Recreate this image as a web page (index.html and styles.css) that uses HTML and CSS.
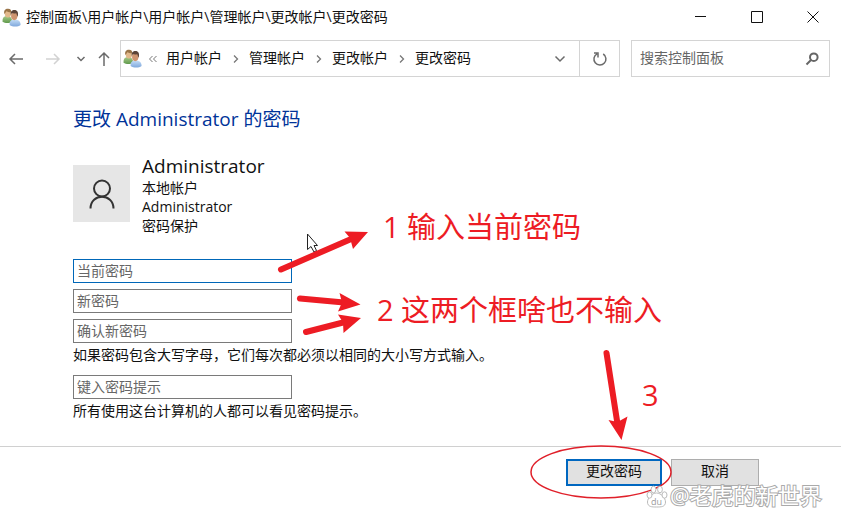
FILE: index.html
```html
<!DOCTYPE html>
<html lang="zh-CN">
<head>
  <meta charset="UTF-8" />
  <meta name="viewport" content="width=device-width, initial-scale=1" />
  <title>更改密码</title>
  <link rel="stylesheet" href="styles.css">
</head>
<body>

  <!-- Shared user accounts icon -->
  <svg class="symbols" aria-hidden="true">
    <defs>
      <linearGradient id="greenBody" x1="0" y1="0" x2="0" y2="1">
        <stop offset="0" stop-color="#a9c98a" />
        <stop offset="1" stop-color="#5f9a4c" />
      </linearGradient>
      <linearGradient id="blueBody" x1="0" y1="0" x2="0" y2="1">
        <stop offset="0" stop-color="#c3dcf6" />
        <stop offset="1" stop-color="#7fa8dc" />
      </linearGradient>
    </defs>
    <symbol id="users" viewBox="0 0 18 18">
      <path d="M0.5 13 C0.3 9 2 7.6 5 7.6 C8 7.6 9.6 9.4 9.6 13 C7 14.6 3 14.6 0.5 13Z" fill="url(#greenBody)" />
      <ellipse cx="5.6" cy="5.2" rx="3" ry="3.7" fill="#e2b98c" />
      <path d="M2.2 5.6 C1.4 2 3.4 0.6 5.6 0.7 C8 0.6 9.2 2.2 8.6 4.2 C6.6 4.2 5 3.2 4 3 C3.6 4 3 5 2.2 5.6Z" fill="#9a7448" />
      <path d="M7.2 16 C7 12.2 9 11 12 11 C15.4 11 17.6 12.8 17.6 16 C15 18 10 18 7.2 16Z" fill="url(#blueBody)" />
      <ellipse cx="11.6" cy="7.6" rx="3" ry="3.9" fill="#cf9570" />
      <path d="M8.4 6.6 C7.8 3.4 9.4 2 11.8 2 C14.6 2 15.8 4.2 14.9 8.2 C14.2 7.4 14 6 13.4 5 C11.8 5.4 10 5.2 9.4 4.8 Z" fill="#5b4438" />
    </symbol>
  </svg>

  <div class="window">

    <header class="title-bar">
      <svg class="users-icon"><use href="#users" /></svg>
      <span class="title">控制面板\用户帐户\用户帐户\管理帐户\更改帐户\更改密码</span>
      <div class="window-buttons">
        <button type="button" aria-label="最小化">
          <svg width="12" height="12" viewBox="0 0 12 12"><path d="M0 5.5H11" /></svg>
        </button>
        <button type="button" aria-label="最大化">
          <svg width="12" height="12" viewBox="0 0 12 12"><path d="M0.5 0.5H11.5V11.5H0.5Z" /></svg>
        </button>
        <button type="button" aria-label="关闭">
          <svg width="12" height="12" viewBox="0 0 12 12"><path d="M0.5 0.5L11.5 11.5M11.5 0.5L0.5 11.5" /></svg>
        </button>
      </div>
    </header>

    <nav class="nav-bar">
      <button class="nav-back" type="button" aria-label="后退">
        <svg width="16" height="14" viewBox="0 0 16 14"><path d="M15 7H2M7 2L2 7L7 12" /></svg>
      </button>
      <button class="nav-forward" type="button" aria-label="前进" disabled>
        <svg width="16" height="14" viewBox="0 0 16 14"><path d="M1 7H14M9 2L14 7L9 12" /></svg>
      </button>
      <button class="nav-recent" type="button" aria-label="最近浏览的位置">
        <svg width="10" height="8" viewBox="0 0 10 8"><path d="M1.5 2L5 5.5L8.5 2" /></svg>
      </button>
      <button class="nav-up" type="button" aria-label="上移">
        <svg width="14" height="16" viewBox="0 0 14 16"><path d="M7 15V2M2 7L7 2L12 7" /></svg>
      </button>

      <div class="address-bar">
        <svg class="users-icon"><use href="#users" /></svg>
        <svg class="double-chevron" width="10" height="8" viewBox="0 0 10 8"><path d="M4.5 1L1.5 4L4.5 7M8.5 1L5.5 4L8.5 7" /></svg>
        <a href="#">用户帐户</a>
        <svg class="chevron" viewBox="0 0 6 10"><path d="M1 1.5L4.5 5L1 8.5" /></svg>
        <a href="#">管理帐户</a>
        <svg class="chevron" viewBox="0 0 6 10"><path d="M1 1.5L4.5 5L1 8.5" /></svg>
        <a href="#">更改帐户</a>
        <svg class="chevron" viewBox="0 0 6 10"><path d="M1 1.5L4.5 5L1 8.5" /></svg>
        <a href="#">更改密码</a>
        <button class="address-history" type="button" aria-label="以前的位置">
          <svg width="12" height="8" viewBox="0 0 12 8"><path d="M1.5 1.5L6 6L10.5 1.5" /></svg>
        </button>
        <button class="refresh" type="button" aria-label="刷新">
          <svg width="16" height="16" viewBox="0 0 16 16"><path d="M11.2 3A6 6 0 1 1 5 2.8M2 2H6V6.4" /></svg>
        </button>
      </div>

      <div class="search-box">
        <input type="text" placeholder="搜索控制面板" aria-label="搜索控制面板">
        <svg width="14" height="14" viewBox="0 0 14 14"><circle cx="8.8" cy="5.2" r="3.8" /><path d="M6 8L1.5 12.5" /></svg>
      </div>
    </nav>

    <form class="password-form">
      <main class="content">
        <h1>更改 Administrator 的密码</h1>

        <div class="account">
          <div class="avatar">
            <svg width="28" height="32" viewBox="0 0 28 32"><circle cx="14" cy="10.5" r="8" /><path d="M2.5 30.5C2.5 14.8 25.5 14.8 25.5 30.5" /></svg>
          </div>
          <div class="account-info">
            <h2>Administrator</h2>
            <p>本地帐户</p>
            <p>Administrator</p>
            <p>密码保护</p>
          </div>
        </div>

        <div class="fields">
          <input class="active" type="password" placeholder="当前密码" aria-label="当前密码">
          <input type="password" placeholder="新密码" aria-label="新密码">
          <input type="password" placeholder="确认新密码" aria-label="确认新密码">
        </div>
        <p class="hint">如果密码包含大写字母，它们每次都必须以相同的大小写方式输入。</p>

        <div class="fields">
          <input type="text" placeholder="键入密码提示" aria-label="键入密码提示">
        </div>
        <p class="hint">所有使用这台计算机的人都可以看见密码提示。</p>
      </main>

      <footer class="actions">
        <button class="primary" type="button">更改密码</button>
        <button type="button">取消</button>
      </footer>
    </form>

    <!-- Red marks, mouse pointer and watermark drawn over the window -->
    <svg class="annotations" width="841" height="526" viewBox="0 0 841 526">
      <path class="pointer" d="M307.500 234V249.500L311 246.500L314 252L316.500 250.500L314 245.500H317.500Z" />

      <g class="arrows">
        <path d="M281 269.500L350 239.500" />
        <path d="M300 298.500L344 302.500" />
        <path d="M306 332L345 322" />
        <path d="M606.500 353L617.500 424" />
      </g>
      <g class="arrow-heads">
        <path d="M368 232L344.500 231.500L350 238L353 249Z" />
        <path d="M360.500 304.500L339.500 293L342 302.500L338 311.500Z" />
        <path d="M361 318L338 314.500L343 322.500L343.500 333Z" />
        <path d="M621.500 440L608.500 420L617.500 422L627.500 416.500Z" />
      </g>
      <ellipse cx="601" cy="472" rx="70" ry="26" />

      <text class="note" x="383" y="238">1 输入当前密码</text>
      <text class="note" x="377" y="321">2 这两个框啥也不输入</text>
      <text class="note" x="642" y="406">3</text>

      <g class="paw">
        <path d="M656.500 493C661 493 665.500 498 665.500 502C665.500 507 661 507 656.500 507C652 507 647.500 507 647.500 502C647.500 498 652 493 656.500 493Z" />
        <ellipse cx="649.500" cy="495" rx="2.500" ry="3.200" />
        <ellipse cx="653.500" cy="489.500" rx="2.400" ry="3.300" />
        <ellipse cx="660" cy="489.500" rx="2.400" ry="3.300" />
        <ellipse cx="664.500" cy="495" rx="2.500" ry="3.200" />
      </g>
      <text class="paw-text" x="651" y="505">du</text>
      <text class="watermark" x="670" y="504">@老虎的新世界</text>
    </svg>

  </div>

</body>
</html>
```
FILE: styles.css
```css
* {
  box-sizing: border-box;
}

body {
  margin: 0;
  background: #fff;
  color: #111;
  font-family: "Open Sans", "Noto Sans CJK SC", sans-serif;
  font-size: 14px;
}

h1,
h2,
p {
  margin: 0;
  font-weight: 400;
}

button,
input {
  font: inherit;
  color: inherit;
}

button {
  padding: 0;
  border: 0;
  background: none;
}

svg {
  display: block;
  flex: none;
  fill: none;
}

a {
  color: inherit;
  text-decoration: none;
}

.symbols {
  position: absolute;
  width: 0;
  height: 0;
}

.window {
  position: relative;
  display: flex;
  flex-direction: column;
  min-height: 100vh;
  overflow: hidden;
}

.users-icon {
  width: 19px;
  height: 19px;
}

/* Title bar */
.title-bar {
  display: flex;
  align-items: center;
  height: 34px;
  padding-left: 2px;
}

.title {
  flex: 1;
  margin-left: 5px;
  padding-bottom: 2px;
  white-space: nowrap;
}

.window-buttons {
  display: flex;
}

.window-buttons button {
  display: flex;
  align-items: center;
  justify-content: center;
  width: 56px;
  height: 34px;
}

.window-buttons svg {
  stroke: #111;
}

/* Navigation */
.nav-bar {
  display: flex;
  height: 43px;
  padding: 6px 11px 0 0;
}

.nav-bar button {
  display: flex;
  align-items: center;
  justify-content: center;
}

.nav-bar button svg {
  stroke: #6b6b6b;
  stroke-width: 1.5;
}

.nav-bar .nav-forward svg {
  stroke: #d2d2d2;
}

.nav-back,
.nav-up {
  width: 32px;
}

.nav-forward {
  width: 42px;
}

.nav-recent {
  width: 14px;
}

.address-bar {
  display: flex;
  flex: 1;
  align-items: center;
  padding-left: 2px;
  border: 1px solid #d4d4d4;
  white-space: nowrap;
}

.address-bar a {
  padding-bottom: 3px;
}

.double-chevron {
  margin: 0 8px 0 6px;
  stroke: #777;
}

.chevron {
  width: 6px;
  height: 10px;
  margin: 0 10px 0 11px;
  stroke: #777;
  stroke-width: 1.3;
}

.address-history {
  width: 38px;
  height: 100%;
  margin-left: auto;
}

.refresh {
  width: 40px;
  height: 100%;
}

.nav-bar .refresh {
  border-left: 1px solid #d4d4d4;
}

.search-box {
  display: flex;
  align-items: center;
  width: 199px;
  margin-left: 11px;
  padding: 0 10px 0 8px;
  border: 1px solid #d4d4d4;
}

.search-box input {
  flex: 1;
  min-width: 0;
  padding: 0 0 2px;
  border: 0;
  outline: 0;
}

.search-box svg {
  stroke: #666;
  stroke-width: 2;
}

input::placeholder {
  color: #666;
  opacity: 1;
}

/* Form */
.password-form {
  display: flex;
  flex: 1;
  flex-direction: column;
}

.content {
  flex: 1;
  padding: 28px 73px 25px;
}

h1 {
  color: #039;
  font-size: 19px;
  line-height: 28px;
}

.account {
  display: flex;
  gap: 12px;
  margin: 21px 0 24px;
}

.avatar {
  display: flex;
  align-items: center;
  justify-content: center;
  width: 57px;
  height: 57px;
  margin-top: 11px;
  background: #e6e6e6;
}

.avatar svg {
  stroke: #333;
  stroke-width: 2;
}

.account-info {
  line-height: 19px;
}

h2 {
  font-size: 19px;
  line-height: 24px;
}

.fields {
  display: flex;
  flex-direction: column;
  gap: 6px;
  width: 219px;
}

.fields input {
  height: 24px;
  padding: 0 3px 2px;
  border: 1px solid #7a7a7a;
  outline: 0;
}

.fields .active {
  border-color: #0067b8;
}

.hint {
  margin-top: 2px;
  line-height: 20px;
}

.hint + .fields {
  margin-top: 10px;
}

.actions {
  display: flex;
  justify-content: flex-end;
  gap: 9px;
  padding: 12px 82px 40px;
  border-top: 1px solid #d0d0d0;
}

.actions button {
  width: 88px;
  height: 27px;
  padding-bottom: 3px;
  border: 1px solid #adadad;
  background: #e1e1e1;
  line-height: 20px;
}

.actions .primary {
  width: 96px;
  border: 2px solid #0067c0;
}

/* Overlay */
.annotations {
  position: absolute;
  top: 0;
  left: 0;
  pointer-events: none;
}

.pointer {
  fill: #fff;
  stroke: #222;
}

.arrows {
  stroke: #ed1c24;
  stroke-width: 6;
  stroke-linecap: round;
}

.arrow-heads {
  fill: #ed1c24;
}

.annotations > ellipse {
  stroke: #e0202a;
  stroke-width: 1.5;
}

.note {
  fill: #ed1c24;
  font-size: 29px;
}

.paw {
  fill: #fff;
  stroke: #bbb;
}

.paw-text {
  fill: #999;
  font-size: 9px;
}

.watermark {
  fill: #fff;
  stroke: #aaa;
  stroke-width: 2;
  paint-order: stroke;
  font-size: 22px;
}
```
